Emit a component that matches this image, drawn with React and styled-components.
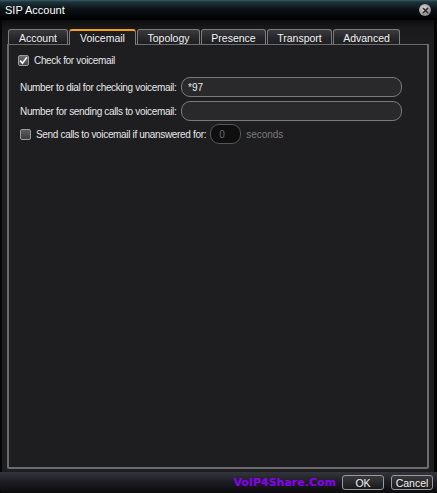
import React from "react";
import styled, { createGlobalStyle } from "styled-components";

const Global = createGlobalStyle`
  html, body { margin: 0; padding: 0; background: #000; }
  body { font-family: "Liberation Sans", Arial, sans-serif; font-size: 10px; }
`;

const Window = styled.div`
  width: 437px;
  height: 493px;
  display: flex;
  flex-direction: column;
  background: #000;
  overflow: hidden;
  white-space: nowrap;
`;

const TitleBar = styled.div`
  height: 20px;
  flex: none;
  display: flex;
  align-items: center;
  justify-content: space-between;
  padding: 0 6px 0 5px;
  background: linear-gradient(#3d5a66 0px, #1d333c 2px, #0c1317 9px, #000 19px);
  color: #fff;
  font-size: 11px;
`;

const CloseButton = styled.div`
  width: 12px;
  height: 12px;
  border-radius: 50%;
  background: radial-gradient(circle at 40% 35%, #d8d8d8, #8a8a8a 70%, #5a5a5a);
  display: flex;
  align-items: center;
  justify-content: center;
`;

const Body = styled.div`
  flex: 1;
  display: flex;
  flex-direction: column;
  padding: 8px 5px 3px 5px;
  background: linear-gradient(#0d0d0f 0px, #19191c 8px, #1e1e21 24px);
  border-left: 2px solid #050505;
  border-right: 3px solid #050505;
`;

const TabRow = styled.div`
  display: flex;
  align-items: flex-end;
  height: 16px;
  padding-left: 1px;
  gap: 1px;
`;

const Tab = styled.div`
  width: ${(p) => p.w}px;
  height: ${(p) => (p.active ? 16 : 15)}px;
  box-sizing: border-box;
  display: flex;
  align-items: center;
  justify-content: center;
  color: #f0f0f0;
  font-size: 10.5px;
  border: 1px solid #7c7c7c;
  border-bottom: none;
  border-radius: 3px 3px 0 0;
  background: ${(p) =>
    p.active ? "#1e1e21" : "linear-gradient(#3b3b3e, #26262a 60%, #1f1f22)"};
  border-top: ${(p) => (p.active ? "2px solid #f4a21a" : "1px solid #7c7c7c")};
  margin-bottom: ${(p) => (p.active ? "-1px" : "0")};
  position: relative;
  z-index: ${(p) => (p.active ? 2 : 1)};
  padding-top: ${(p) => (p.active ? "0" : "1px")};
`;

const Panel = styled.div`
  flex: 1;
  border: 2px solid #6c6c6c;
  border-top-width: 1px;
  border-radius: 0 0 2px 2px;
  background: #1e1e21;
  padding: 8px 0 0 9px;
  display: flex;
  flex-direction: column;
`;

const CheckRow = styled.label`
  display: flex;
  align-items: center;
  gap: 5px;
  height: ${(p) => p.h || 12}px;
  color: #e6e6e6;
`;

const Box = styled.span`
  width: 11px;
  height: 11px;
  box-sizing: border-box;
  border: 1px solid #9a9a9a;
  border-radius: 2px;
  background: ${(p) =>
    p.checked ? "linear-gradient(#6a6a6e, #4a4a4e)" : "linear-gradient(#5c5c60, #3c3c40)"};
  display: flex;
  align-items: center;
  justify-content: center;
`;

const FieldRow = styled.div`
  display: flex;
  align-items: center;
  height: 20px;
  margin-top: ${(p) => p.mt || 0}px;
  padding-left: 2px;
  color: #e6e6e6;
`;

const Label = styled.span`
  width: 161px;
  flex: none;
  letter-spacing: -0.33px;
`;

const TextInput = styled.div`
  width: 221px;
  height: 20px;
  box-sizing: border-box;
  border: 1.5px solid #7a7a7c;
  border-radius: 9px;
  background: #29292b;
  color: #e8e8e8;
  display: flex;
  align-items: center;
  padding-left: 6px;
`;

const SmallInput = styled.div`
  width: 31px;
  height: 20px;
  box-sizing: border-box;
  border: 1.5px solid #555;
  border-radius: 9px;
  background: #0f0f10;
  color: #6a6a6a;
  display: flex;
  align-items: center;
  padding-left: 8px;
  margin-left: 4px;
`;

const CheckText = styled.span`
  letter-spacing: -0.33px;
`;

const Muted = styled.span`
  color: #7a7a7a;
  margin-left: 5px;
`;

const Footer = styled.div`
  height: 21px;
  flex: none;
  display: flex;
  align-items: center;
  justify-content: flex-end;
  gap: 7px;
  padding: 0 4px 0 0;
  border-radius: 0 0 4px 4px;
  background: linear-gradient(#34343d, #1c1c22 50%, #0c0c0e);
`;

const Brand = styled.span`
  color: #8a00f0;
  font-family: "DejaVu Sans", sans-serif;
  font-weight: bold;
  font-size: 11px;
  margin-right: -1px;
`;

const Button = styled.div`
  width: ${(p) => p.w}px;
  height: 15px;
  box-sizing: border-box;
  border: 1px solid #9a9a9a;
  border-radius: 3px;
  background: linear-gradient(#3a3a3e, #1a1a1c);
  color: #f0f0f0;
  display: flex;
  align-items: center;
  justify-content: center;
  font-size: 10.5px;
`;

const tabs = [
  { name: "Account", w: 60 },
  { name: "Voicemail", w: 67, active: true },
  { name: "Topology", w: 63 },
  { name: "Presence", w: 65 },
  { name: "Transport", w: 65 },
  { name: "Advanced", w: 67 },
];

const Check = () => (
  <svg width="9" height="9" viewBox="0 0 9 9">
    <path d="M1.2 4.6 L3.5 7.2 L7.9 1.3" fill="none" stroke="#f4f4f4" strokeWidth="1.7" />
  </svg>
);

export default function App() {
  return (
    <Window>
      <Global />
      <TitleBar>
        <span>SIP Account</span>
        <CloseButton>
          <svg width="7" height="7" viewBox="0 0 7 7">
            <path d="M1 1 L6 6 M6 1 L1 6" stroke="#2a2a2a" strokeWidth="1.6" />
          </svg>
        </CloseButton>
      </TitleBar>
      <Body>
        <TabRow>
          {tabs.map((t) => (
            <Tab key={t.name} w={t.w} active={t.active}>
              {t.name}
            </Tab>
          ))}
        </TabRow>
        <Panel>
          <CheckRow h={14}>
            <Box checked>
              <Check />
            </Box>
            <CheckText>Check for voicemail</CheckText>
          </CheckRow>
          <FieldRow mt={10}>
            <Label>Number to dial for checking voicemail:</Label>
            <TextInput>*97</TextInput>
          </FieldRow>
          <FieldRow mt={4}>
            <Label>Number for sending calls to voicemail:</Label>
            <TextInput />
          </FieldRow>
          <FieldRow mt={3}>
            <CheckRow>
              <Box />
              <CheckText>Send calls to voicemail if unanswered for:</CheckText>
            </CheckRow>
            <SmallInput>0</SmallInput>
            <Muted>seconds</Muted>
          </FieldRow>
        </Panel>
      </Body>
      <Footer>
        <Brand>VoIP4Share.Com</Brand>
        <Button w={42}>OK</Button>
        <Button w={42}>Cancel</Button>
      </Footer>
    </Window>
  );
}
